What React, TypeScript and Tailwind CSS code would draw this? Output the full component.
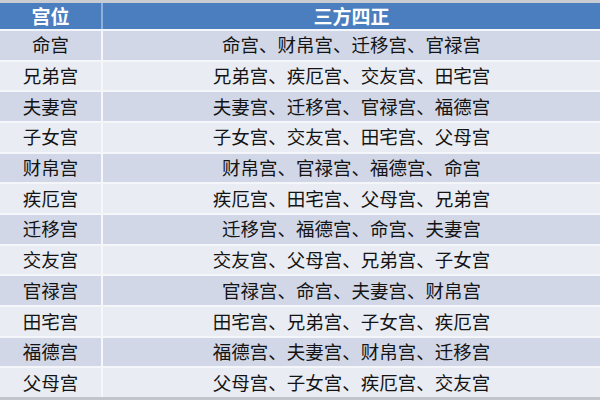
const ROWS: [string, string][] = [
  ["命宫", "命宫、财帛宫、迁移宫、官禄宫"],
  ["兄弟宫", "兄弟宫、疾厄宫、交友宫、田宅宫"],
  ["夫妻宫", "夫妻宫、迁移宫、官禄宫、福德宫"],
  ["子女宫", "子女宫、交友宫、田宅宫、父母宫"],
  ["财帛宫", "财帛宫、官禄宫、福德宫、命宫"],
  ["疾厄宫", "疾厄宫、田宅宫、父母宫、兄弟宫"],
  ["迁移宫", "迁移宫、福德宫、命宫、夫妻宫"],
  ["交友宫", "交友宫、父母宫、兄弟宫、子女宫"],
  ["官禄宫", "官禄宫、命宫、夫妻宫、财帛宫"],
  ["田宅宫", "田宅宫、兄弟宫、子女宫、疾厄宫"],
  ["福德宫", "福德宫、夫妻宫、财帛宫、迁移宫"],
  ["父母宫", "父母宫、子女宫、疾厄宫、交友宫"],
];

export default function App() {
  return (
    <div
      className="flex h-[400px] w-[600px] flex-col bg-[#f4f6fa] text-[18.5px] text-[#141414]"
      style={{ fontFamily: '"Noto Sans CJK SC", "Noto Sans", sans-serif' }}
    >
      {/* top strip */}
      <div className="h-[3px] bg-[#c9cdd3]" />

      {/* header */}
      <div className="flex h-[26px] bg-[#4a7ebf] text-[19px] font-bold text-white">
        <div className="flex w-[101px] items-center justify-center">宫位</div>
        <div className="w-[2px] bg-[#8fb0da]" />
        <div className="flex flex-1 items-center justify-center">三方四正</div>
      </div>

      {/* body */}
      <div className="flex flex-1 flex-col gap-[2px] pt-[2px]">
        {ROWS.map(([palace, group], i) => (
          <div
            key={palace}
            className={`flex flex-1 ${i % 2 === 0 ? "bg-[#d1d7e7]" : "bg-[#e9ecf3]"}`}
          >
            <div className="flex w-[101px] items-center justify-center">{palace}</div>
            <div className="w-[2px] bg-[#f6f7fb]" />
            <div className="flex flex-1 items-center justify-center">{group}</div>
          </div>
        ))}
      </div>

      {/* bottom strip */}
      <div className="h-[3px] bg-[#c2c6cc]" />
    </div>
  );
}
